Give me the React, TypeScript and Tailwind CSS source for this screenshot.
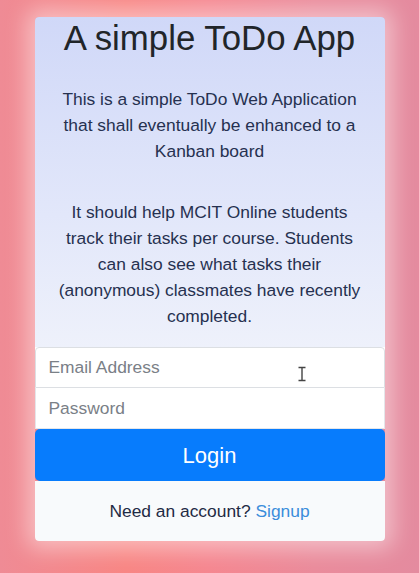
import React from 'react';

const App: React.FC = () => {
  return (
    <div
      className="relative min-h-[573px] w-full overflow-hidden pt-[17px] bg-[linear-gradient(90deg,#ef8b95_0%,#f88684_30%,#f58790_50%,#ea8b9b_75%,#e48b9f_100%)]"
      style={{ fontFamily: '"Liberation Sans", Arial, sans-serif' }}
    >
      <div className="mx-auto w-[350px] rounded-[4px] overflow-hidden shadow-[0_0_22px_8px_rgba(255,255,255,0.45)]">
        <div className="bg-[linear-gradient(180deg,#d0d8f8_0%,#e2e7fa_60%,#eef1fb_100%)] pb-[18px]">
          <h1 className="text-center text-[34.8px] leading-[41px] text-[#212529]">A simple ToDo App</h1>
          <p className="mt-[28px] px-4 text-center text-[17.4px] leading-[26px] text-[#263150]">
            This is a simple ToDo Web Application that shall eventually be enhanced to a Kanban board
          </p>
          <p className="mt-[35px] px-4 text-center text-[17.4px] leading-[26px] text-[#263150]">
            It should help MCIT Online students track their tasks per course. Students can also see what tasks
            their (anonymous) classmates have recently completed.
          </p>
        </div>

        <div className="flex flex-col bg-white">
          <input
            type="email"
            placeholder="Email Address"
            className="h-[41px] w-full rounded-t-[4px] border border-[#dcdfe3] bg-white px-[13px] text-[17.4px] text-[#495057] placeholder:text-[#7a8087] outline-none"
          />
          <input
            type="password"
            placeholder="Password"
            className="h-[41px] w-full border border-t-0 border-[#e4e6ea] bg-white px-[13px] text-[17.4px] text-[#495057] placeholder:text-[#7a8087] outline-none"
          />
        </div>
        <button className="h-[52px] w-full rounded-[5px] bg-[#077cfd] text-[22px] text-white">Login</button>
        <div className="flex h-[60px] items-center justify-center bg-[#f8fafc] text-[17.4px] text-[#1f2a44]">
          <span>
            Need an account? <a className="text-[#3b8ddb]">Signup</a>
          </span>
        </div>
      </div>

      <svg
        className="absolute left-[297px] top-[366px]"
        width="10"
        height="16"
        viewBox="0 0 10 16"
      >
        <path
          d="M1.5 1.5h7M5 1.5v13M1.5 14.5h7"
          stroke="#ffffff"
          strokeWidth="3"
          fill="none"
          strokeLinecap="round"
        />
        <path
          d="M1.5 1.5h7M5 1.5v13M1.5 14.5h7"
          stroke="#444444"
          strokeWidth="1.4"
          fill="none"
        />
      </svg>
    </div>
  );
};

export default App;
